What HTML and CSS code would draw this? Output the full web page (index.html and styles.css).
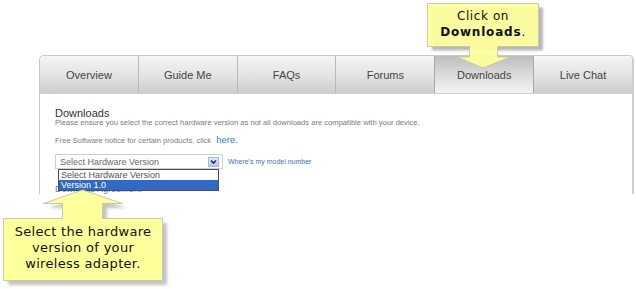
FILE: index.html
```html
<!DOCTYPE html>
<html>
<head>
<meta charset="utf-8">
<link rel="stylesheet" href="styles.css">
</head>
<body>
<div class="stage">
  <div class="panel">
    <div class="tabs">
      <div class="tab">Overview</div>
      <div class="tab">Guide Me</div>
      <div class="tab">FAQs</div>
      <div class="tab">Forums</div>
      <div class="tab active">Downloads</div>
      <div class="tab last">Live Chat</div>
    </div>
    <div class="content">
      <h1 class="title">Downloads</h1>
      <p class="note">Please ensure you select the correct hardware version as not all downloads are compatible with your device.</p>
      <p class="free">Free Software notice for certain products, click <a class="here">here.</a></p>
      <div class="selrow">
        <div class="selwrap">
          <div class="select">
            <span>Select Hardware Version</span>
            <span class="arrowbtn"><svg width="9" height="8" viewBox="0 0 9 8"><path d="M2 2.5 L4.5 5 L7 2.5" fill="none" stroke="#1d2f5a" stroke-width="1.6"/></svg></span>
          </div>
          <div class="list">
            <div class="opt">Select Hardware Version</div>
            <div class="opt sel">Version 1.0</div>
          </div>
        </div>
        <a class="model">Where's my model number</a>
      </div>
      <a class="agree">Download Agreement</a>
    </div>
  </div>

  <div class="callout c1">
    <svg class="shape" width="120" height="72" viewBox="0 0 120 72">
      <defs><filter id="b1" x="-10%" y="-10%" width="130%" height="130%"><feGaussianBlur stdDeviation="1.2"/></filter></defs>
      <polygon transform="translate(4.5,4)" filter="url(#b1)" fill="#b8b8b8" points="0.5,0.5 111.5,0.5 111.5,43.5 0.5,43.5"/>
      <polygon fill="#ffff9c" fill-opacity="0.92" stroke="#c9c9a6" points="0.5,0.5 111.5,0.5 111.5,43.5 70.5,43.5 70.5,54 83,54 56,65 30,54 42.5,54 42.5,43.5 0.5,43.5"/>
    </svg>
    <div class="ctext t1">Click on<br><b>Downloads</b>.</div>
  </div>

  <div class="callout c2">
    <svg class="shape" width="170" height="104" viewBox="0 0 170 104">
      <defs><filter id="b2" x="-10%" y="-10%" width="130%" height="130%"><feGaussianBlur stdDeviation="1.5"/></filter></defs>
      <polygon transform="translate(5,5)" filter="url(#b2)" fill="#c4c4c4" points="79,5 119,18 99,18 99,33 159,33 159,95 0,95 0,33 59,33 59,18 40,18"/>
      <polygon fill="#ffff9c" stroke="#c9c9a6" points="79.5,5 119.5,18.5 99.5,18.5 99.5,33.5 159.5,33.5 159.5,95.5 0.5,95.5 0.5,33.5 59.5,33.5 59.5,18.5 40.5,18.5"/>
    </svg>
    <div class="ctext t2">Select the hardware<br>version of your<br>wireless adapter.</div>
  </div>
</div>
</body>
</html>
```

FILE: styles.css
```css
html, body {
  margin: 0;
  padding: 0;
  background: #ffffff;
}
.stage {
  position: relative;
  width: 636px;
  height: 289px;
  overflow: hidden;
  font-family: "Liberation Sans", Arial, sans-serif;
}
.panel {
  margin: 55px 0 0 39px;
  width: 592px;
  height: 138px;
  border: 1px solid #c9c9c9;
  border-right: 2px solid #cfcfcf;
  border-bottom: none;
  border-radius: 5px 5px 0 0;
  overflow: hidden;
  background: #fff;
}
.tabs {
  display: flex;
  height: 37px;
  border-bottom: 1px solid #cfcfcf;
}
.tab {
  flex: 1;
  display: flex;
  align-items: center;
  justify-content: center;
  font-size: 11px;
  color: #444;
  background: linear-gradient(#f5f5f5, #e2e2e2 55%, #cdcdcd);
  border-right: 1px solid #b9b9b9;
}
.tab.last {
  border-right: none;
}
.tab.active {
  background: linear-gradient(#bdbdbd, #d8d8d8 45%, #f3f3f3);
  border-right: 1px solid #a9a9a9;
  border-left: 1px solid #a9a9a9;
  margin-left: -1px;
}
.content {
  padding: 14px 0 0 15px;
}
.title {
  margin: 0;
  font-size: 11px;
  font-weight: normal;
  color: #333;
  line-height: 11px;
}
.note {
  margin: 0;
  font-size: 7.6px;
  line-height: 8px;
  color: #7a7a7a;
}
.free {
  margin: 6px 0 0 0;
  font-size: 7.6px;
  line-height: 14px;
  color: #7a7a7a;
}
.here {
  font-size: 9.5px;
  color: #2e7bd1;
  margin-left: 3px;
}
.selrow {
  display: flex;
  align-items: center;
  gap: 5px;
  margin-top: 6px;
  height: 15px;
}
.selwrap {
  position: relative;
}
.select {
  width: 159px;
  height: 13px;
  border: 1px solid #cfcfcf;
  display: flex;
  align-items: center;
  justify-content: space-between;
  padding: 0 3px 0 4px;
  font-size: 9px;
  color: #6a6a6a;
}
.arrowbtn {
  width: 9px;
  height: 8px;
  background: linear-gradient(#dfe8fb, #b7c9ee);
  border: 1px solid #a8b8dc;
  display: flex;
  align-items: center;
  justify-content: center;
}
.arrowbtn svg {
  display: block;
}
.list {
  position: absolute;
  left: 3px;
  top: 15px;
  width: 159px;
  border: 1px solid #4f4f4f;
  background: #fff;
  font-size: 9px;
  line-height: 10px;
  z-index: 2;
}
.opt {
  padding-left: 2px;
  color: #555;
}
.opt.sel {
  background: #3169c6;
  color: #fff;
}
.model {
  font-size: 7px;
  color: #3a74c6;
  margin-top: -1px;
}
.agree {
  display: block;
  margin-top: 15px;
  font-size: 9px;
  line-height: 10px;
  color: #4f8ad9;
}
.callout {
  position: absolute;
  z-index: 5;
}
.shape {
  position: absolute;
  left: 0;
  top: 0;
}
.ctext {
  position: absolute;
  text-align: center;
  font-family: "DejaVu Sans", Verdana, sans-serif;
  color: #111;
}
.c1 {
  left: 427px;
  top: 3px;
  width: 120px;
  height: 72px;
}
.t1 {
  left: 0;
  top: 5px;
  width: 112px;
  font-size: 12px;
  line-height: 16px;
  letter-spacing: 0.6px;
}
.t1 b {
  letter-spacing: 0.8px;
}
.c2 {
  left: 3px;
  top: 185px;
  width: 170px;
  height: 104px;
}
.t2 {
  left: 0;
  top: 39px;
  width: 160px;
  font-size: 13px;
  line-height: 16px;
  letter-spacing: 0.3px;
}
```
